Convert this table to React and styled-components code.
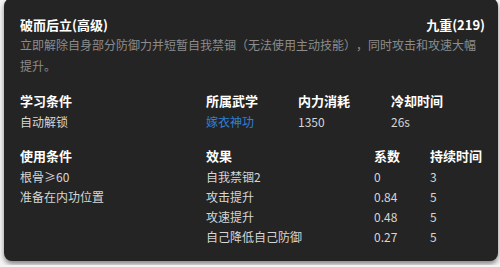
import React from 'react'
import styled, { createGlobalStyle } from 'styled-components'

const GlobalStyle = createGlobalStyle`
body {
  margin: 0;
  background: #f4f4f4;
  font-family: "Noto Sans CJK SC", "Noto Sans", sans-serif;
  text-spacing-trim: space-all;
}
`

const effects = [
    { name: '自我禁锢2', factor: '0', duration: '3' },
    { name: '攻击提升', factor: '0.84', duration: '5' },
    { name: '攻速提升', factor: '0.48', duration: '5' },
    { name: '自己降低自己防御', factor: '0.27', duration: '5' },
]

const App = () => {
    return (
        <Page>
            <GlobalStyle />
            <Card>
                <Header>
                    <Title>破而后立(高级)</Title>
                    <Title>九重(219)</Title>
                </Header>
                <Description>
                    立即解除自身部分防御力并短暂自我禁锢（无法使用主动技能），同时攻击和攻速大幅提升。
                </Description>

                <Section>
                    <Column>
                        <Heading>学习条件</Heading>
                        <Value>自动解锁</Value>
                    </Column>
                    <InfoGrid>
                        <Column>
                            <Heading>所属武学</Heading>
                            <Value link>嫁衣神功</Value>
                        </Column>
                        <Column>
                            <Heading>内力消耗</Heading>
                            <Value>1350</Value>
                        </Column>
                        <Column>
                            <Heading>冷却时间</Heading>
                            <Value>26s</Value>
                        </Column>
                    </InfoGrid>
                </Section>

                <Section second>
                    <Column>
                        <Heading>使用条件</Heading>
                        <Value>根骨≥60</Value>
                        <Value>准备在内功位置</Value>
                    </Column>
                    <EffectTable>
                        <Heading>效果</Heading>
                        <Heading>系数</Heading>
                        <Heading>持续时间</Heading>
                        {effects.map((e) => (
                            <React.Fragment key={e.name}>
                                <Value>{e.name}</Value>
                                <Value>{e.factor}</Value>
                                <Value>{e.duration}</Value>
                            </React.Fragment>
                        ))}
                    </EffectTable>
                </Section>
            </Card>
        </Page>
    )
}

export default App

const Page = styled.div`
padding: 0 2px 0 4px;
height: 267px;
box-sizing: border-box;
`

const Card = styled.div`
margin-top: -2px;
padding: 18px 13px 14px 16px;
background-color: #242424;
border-radius: 8px;
box-shadow: 0 3px 5px rgba(0, 0, 0, 0.45);
`

const Header = styled.div`
display: flex;
justify-content: space-between;
align-items: center;
`

const Title = styled.div`
color: #ffffff;
font-size: 13px;
font-weight: bold;
line-height: 18px;
`

const Description = styled.div`
color: #8c8c8c;
font-size: 12px;
line-height: 21px;
`

const Section = styled.div`
display: grid;
grid-template-columns: 186px 1fr;
margin-top: ${(p) => (p.second ? '15px' : '16px')};
`

const Column = styled.div`
display: flex;
flex-direction: column;
`

const InfoGrid = styled.div`
display: grid;
grid-template-columns: 92px 93px 1fr;
`

const EffectTable = styled.div`
display: grid;
grid-template-columns: 168px 56px 1fr;
`

const Heading = styled.div`
color: #ffffff;
font-size: 13px;
font-weight: bold;
line-height: 18px;
margin-bottom: 2px;
`

const Value = styled.div`
color: ${(p) => (p.link ? '#2f80d8' : '#d6d6d6')};
font-size: 12px;
line-height: 20px;
`
